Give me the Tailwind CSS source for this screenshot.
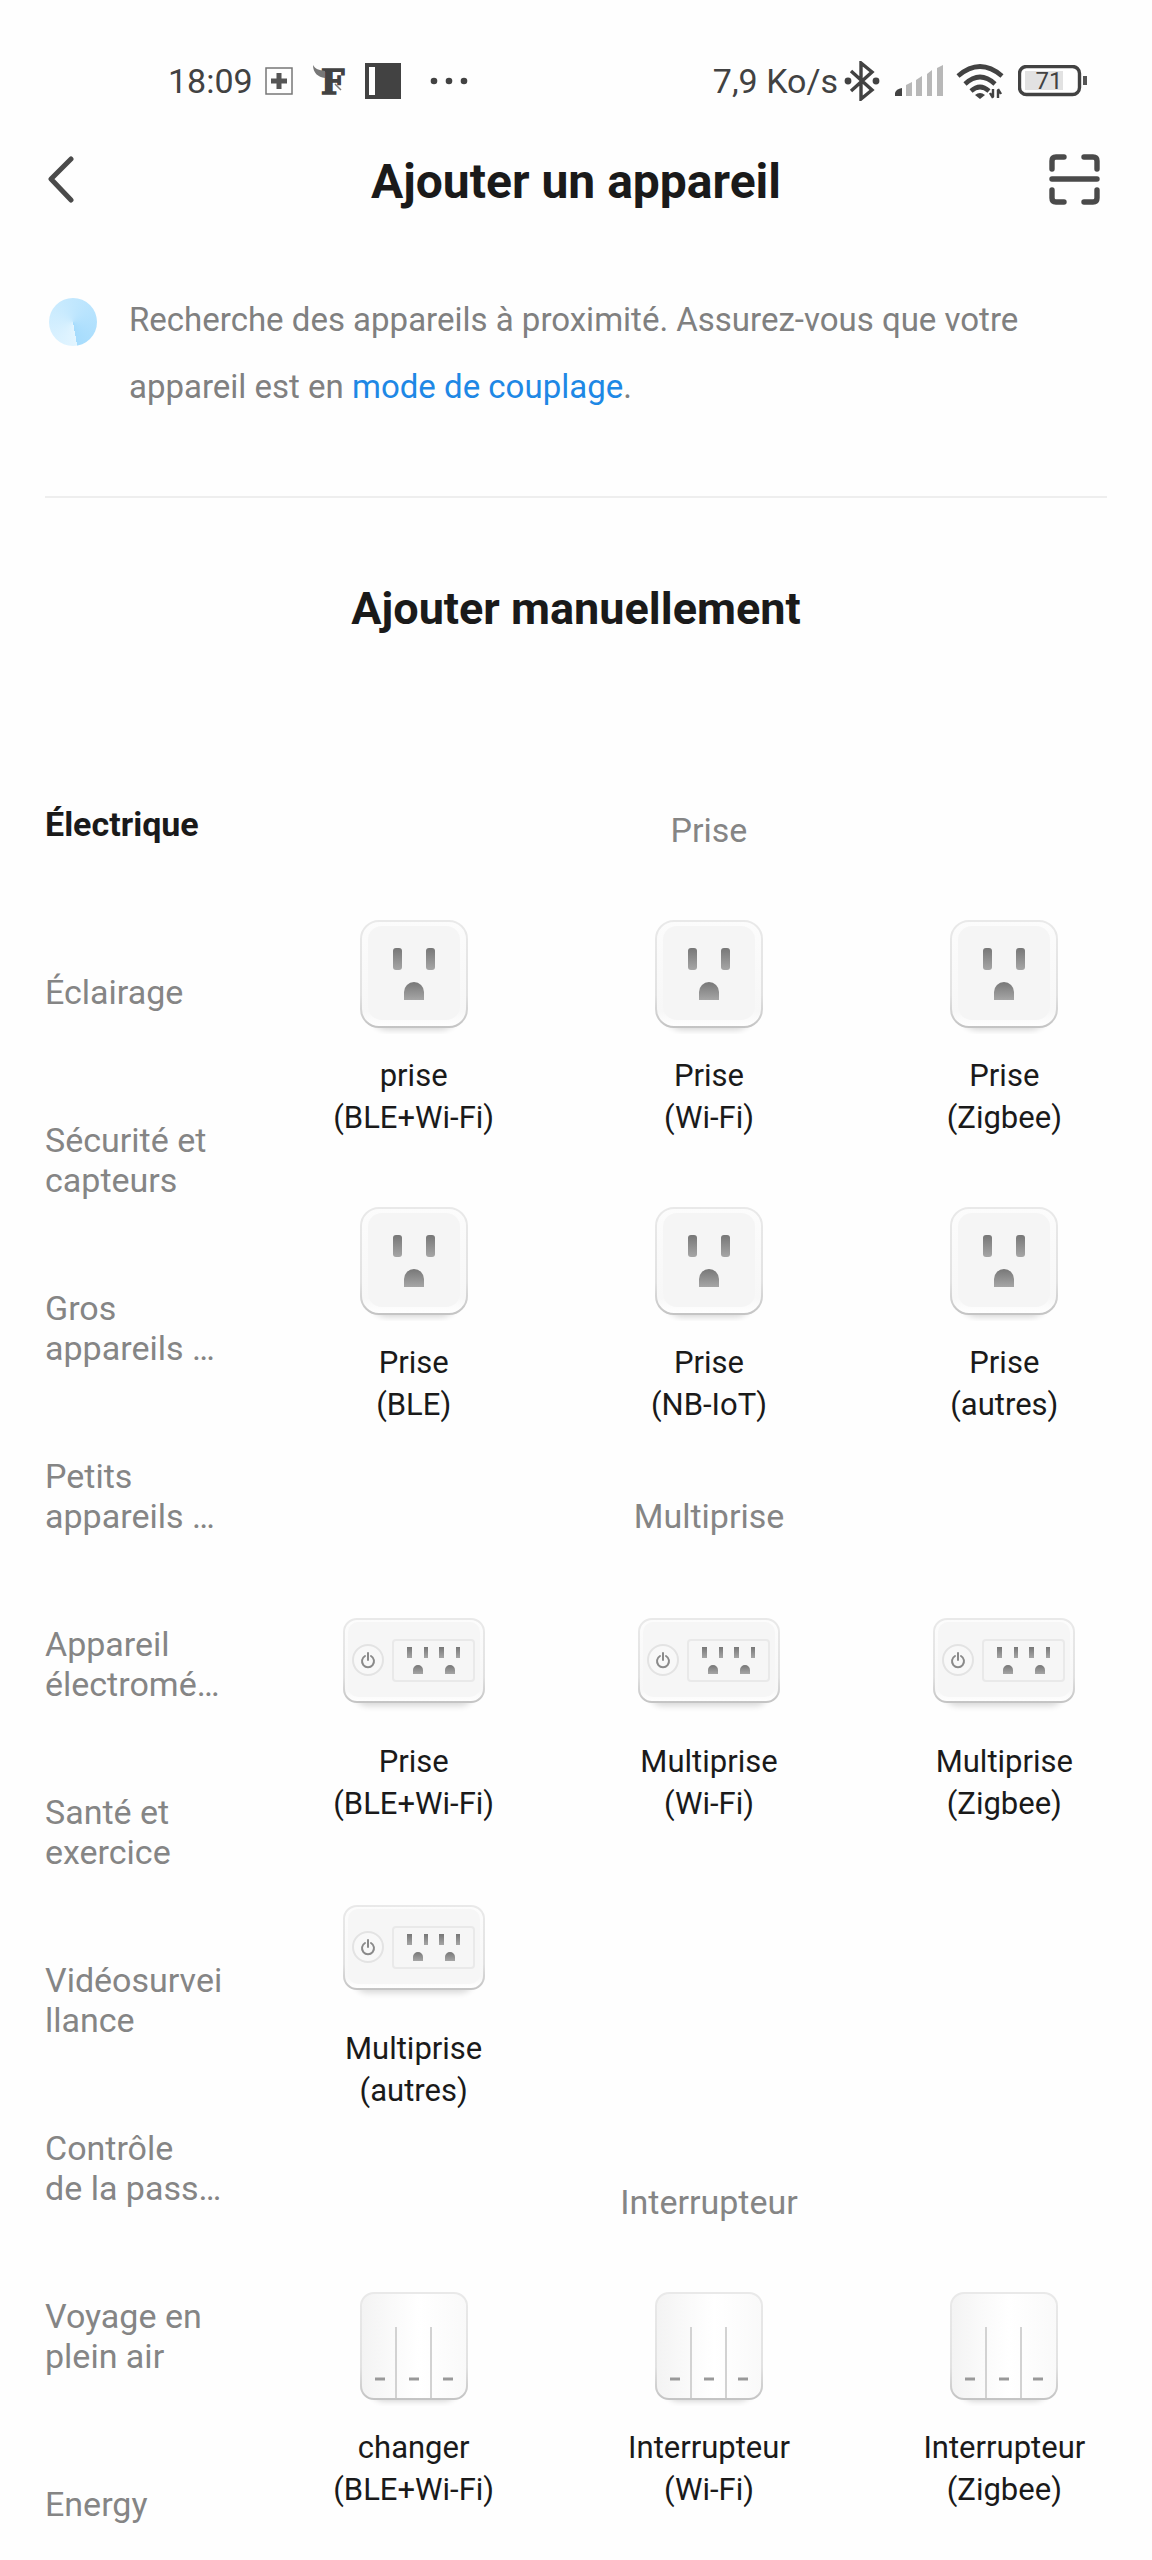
<!DOCTYPE html>
<html lang="fr">
<head>
    <meta charset="UTF-8">
    <meta name="viewport" content="width=device-width, initial-scale=1.0">
    <title>Ajouter un appareil</title>
    <script src="https://cdn.jsdelivr.net/npm/@tailwindcss/browser@4"></script>
</head>
<body class="bg-[#fefefe] font-[Roboto,sans-serif] text-[#1a1a1a] h-screen flex flex-col overflow-hidden">

    <!-- Shared drawings -->
    <svg class="absolute size-0" aria-hidden="true">
        <defs>
            <linearGradient id="slot" x1="0" y1="0" x2="0" y2="1">
                <stop offset="0" stop-color="#777"/>
                <stop offset="1" stop-color="#a6a6a6"/>
            </linearGradient>
            <linearGradient id="body" x1="0" y1="0" x2="0" y2="1">
                <stop offset="0" stop-color="#fcfcfc"/>
                <stop offset=".85" stop-color="#f7f7f7"/>
                <stop offset="1" stop-color="#ffffff"/>
            </linearGradient>
            <linearGradient id="panel" x1="0" y1="0" x2="1" y2="0">
                <stop offset="0" stop-color="#f3f3f3"/>
                <stop offset=".3" stop-color="#fafafa"/>
                <stop offset=".55" stop-color="#ffffff"/>
                <stop offset="1" stop-color="#f9f9f9"/>
            </linearGradient>
            <linearGradient id="rim" x1="0" y1="0" x2="0" y2="1">
                <stop offset="0" stop-color="#e9e9e9"/>
                <stop offset=".7" stop-color="#e2e2e2"/>
                <stop offset="1" stop-color="#c4c4c4"/>
            </linearGradient>
            <filter id="soft" x="-20%" y="-20%" width="140%" height="150%">
                <feGaussianBlur stdDeviation="3"/>
            </filter>
        </defs>

        <symbol id="socket" viewBox="0 0 160 120">
            <rect x="36" y="18" width="88" height="98" rx="18" fill="#000" opacity=".16" filter="url(#soft)"/>
            <rect x="27" y="7" width="106" height="106" rx="18" fill="url(#body)" stroke="url(#rim)" stroke-width="2"/>
            <rect x="34" y="12" width="92" height="94" rx="14" fill="#f5f5f5"/>
            <rect x="59" y="34" width="9" height="22" rx="3" fill="url(#slot)"/>
            <rect x="92" y="34" width="9" height="22" rx="3" fill="url(#slot)"/>
            <path d="M70 86V78a10 10 0 0 1 20 0v8z" fill="url(#slot)"/>
        </symbol>

        <symbol id="strip" viewBox="0 0 160 120">
            <rect x="20" y="32" width="120" height="74" rx="14" fill="#000" opacity=".15" filter="url(#soft)"/>
            <rect x="10" y="19" width="140" height="83" rx="13" fill="url(#body)" stroke="url(#rim)" stroke-width="2"/>
            <rect x="14" y="22" width="132" height="75" rx="10" fill="#f6f6f6"/>
            <circle cx="34" cy="60" r="15" fill="#f8f8f8" stroke="#e3e3e3" stroke-width="2"/>
            <path d="M31 56a6 6 0 1 0 6 0M34 53v7" fill="none" stroke="#8a8a8a" stroke-width="2" stroke-linecap="round"/>
            <rect x="59" y="40" width="81" height="41" rx="3" fill="#f6f6f6" stroke="#e9e9e9" stroke-width="2"/>
            <rect x="73" y="47" width="5" height="11" fill="url(#slot)"/>
            <rect x="90" y="47" width="4" height="11" fill="url(#slot)"/>
            <rect x="105" y="47" width="5" height="11" fill="url(#slot)"/>
            <rect x="122" y="47" width="4" height="11" fill="url(#slot)"/>
            <path d="M79 74v-4a5 5 0 0 1 10 0v4zM111 74v-4a5 5 0 0 1 10 0v4z" fill="url(#slot)"/>
        </symbol>

        <symbol id="switch" viewBox="0 0 160 120">
            <rect x="36" y="18" width="88" height="97" rx="14" fill="#000" opacity=".18" filter="url(#soft)"/>
            <rect x="27" y="7" width="106" height="106" rx="13" fill="url(#panel)" stroke="url(#rim)" stroke-width="2"/>
            <path d="M62 41v71M97 41v71" stroke="#d2d2d2" stroke-width="2"/>
            <path d="M41 93h10M75 93h10M109 93h10" stroke="#999" stroke-width="3"/>
        </symbol>
    </svg>

    <!-- Status bar -->
    <div class="shrink-0 mt-14 h-[50px] flex items-center justify-between pl-[168px] pr-16 text-[34px] leading-none text-[#424242]">
        <div class="flex items-center">
            <span>18:09</span>
            <svg class="ml-3 size-7" viewBox="0 0 28 28">
                <rect x="1" y="1" width="26" height="26" fill="none" stroke="#777" stroke-width="1.5"/>
                <path d="M14 6v16M6 14h16" stroke="#555" stroke-width="5"/>
            </svg>
            <svg class="ml-5 w-9 h-8 overflow-visible" viewBox="0 0 36 32">
                <text x="8" y="29" font-family="DejaVu Serif" font-weight="700" font-size="33" fill="#424242" stroke="#424242" stroke-width="1.5">F</text>
                <path d="M0 0c2 4 6 5 12 6v7C5 12 0 8 0 0z" fill="#777"/>
                <path d="M22 19l6 6" stroke="#777" stroke-width="1.5"/>
            </svg>
            <svg class="ml-4 size-9" viewBox="0 0 36 36">
                <path d="M0 0h36v36H0z" fill="#424242"/>
                <path d="M4 4h6v28H4z" fill="#fff"/>
            </svg>
            <svg class="ml-7 w-10 h-2" viewBox="0 0 40 8">
                <g fill="#424242"><circle cx="5" cy="4" r="3.3"/><circle cx="20" cy="4" r="3.3"/><circle cx="35" cy="4" r="3.3"/></g>
            </svg>
        </div>
        <div class="flex items-center">
            <span>7,9 Ko/s</span>
            <svg class="ml-1.5 w-9 h-10" viewBox="0 0 36 40">
                <path d="M7 10l21 19-11 9V2l11 9L7 30" fill="none" stroke="#424242" stroke-width="3.4"/>
                <circle cx="4" cy="20" r="3.4" fill="#424242"/><circle cx="32" cy="20" r="3.4" fill="#424242"/>
            </svg>
            <svg class="ml-3.5 w-[50px] h-8" viewBox="0 0 50 32">
                <path d="M1 31v-3q1-4 7-5v8z" fill="#424242"/>
                <path d="M12 31V20l6-3v14zM22 31V15l6-4v20zM33 31V9l5-4v26zM43 31V3l6-3v31z" fill="#b8b8b8"/>
            </svg>
            <svg class="ml-3 w-12 h-9" viewBox="0 0 48 36">
                <path d="M2 13Q24-6 46 13M9 21Q24 7 39 21M15 28Q24 20 33 28" fill="none" stroke="#424242" stroke-width="4.6"/>
                <path d="M19 32q5-4 10 0l-5 4z" fill="#424242"/>
                <path d="M37 26v8M34 30l3 5M42 35v-8M45 31l-3-5" fill="none" stroke="#424242" stroke-width="2.4"/>
            </svg>
            <svg class="ml-3.5 w-[70px] h-8" viewBox="0 0 70 32">
                <rect x="1.5" y="1.5" width="60" height="28" rx="7" fill="#fff" stroke="#424242" stroke-width="3.4"/>
                <path d="M7 6h38v19H7z" fill="#e2e2e2"/>
                <path d="M65 11h4v9h-4z" fill="#555"/>
                <text x="31" y="24" text-anchor="middle" font-family="Roboto" font-size="24" fill="#424242">71</text>
            </svg>
        </div>
    </div>

    <!-- Header -->
    <header class="shrink-0 h-[152px] flex items-center px-12">
        <button type="button" aria-label="Retour">
            <svg class="w-14 h-[52px]" viewBox="0 0 56 52" fill="none" stroke="#4a4a4a" stroke-width="5" stroke-linecap="round" stroke-linejoin="round">
                <path d="M23 3L3 23l20 21"/>
            </svg>
        </button>
        <h1 class="flex-1 text-center text-5xl font-bold">Ajouter un appareil</h1>
        <button type="button" aria-label="Scanner">
            <svg class="w-14 h-[52px] overflow-visible" viewBox="0 0 56 52" fill="none" stroke="#4a4a4a" stroke-width="5.4" stroke-linecap="round">
                <path d="M4 13V5q0-4 4-4h8M36 1h9q4 0 4 4v8M49 34v8q0 4-4 4h-9M16 46H8q-4 0-4-4v-8M4 23h45"/>
            </svg>
        </button>
    </header>

    <!-- Nearby search -->
    <section class="shrink-0 mx-[45px] pt-7 pb-[76px] border-b-2 border-[#eeeeee] flex">
        <div class="mt-3 ml-1 size-12 rounded-full shrink-0 bg-[conic-gradient(from_170deg,#e3f5ff,#c3e8fe_50%,#a6dcfd)]"></div>
        <p class="ml-8 text-[33px] leading-[67px] text-[#808080]">
            Recherche des appareils à proximité. Assurez-vous que votre<br>
            appareil est en <a href="#" class="text-[#1e88e5]">mode de couplage</a>.
        </p>
    </section>

    <h2 class="shrink-0 pt-[84px] pb-[104px] text-center text-[45px] leading-[54px] font-bold">Ajouter manuellement</h2>

    <main class="flex-1 min-h-0 flex">
        <!-- Categories -->
        <nav class="w-[266px] shrink-0 overflow-hidden pl-[45px] text-[34px] leading-10 text-[#858585]">
            <button type="button" class="w-full h-[168px] text-left block font-bold text-[#1a1a1a]">Électrique</button>
            <button type="button" class="w-full h-[168px] text-left block">Éclairage</button>
            <button type="button" class="w-full h-[168px] text-left block">Sécurité et<br>capteurs</button>
            <button type="button" class="w-full h-[168px] text-left block">Gros<br>appareils …</button>
            <button type="button" class="w-full h-[168px] text-left block">Petits<br>appareils …</button>
            <button type="button" class="w-full h-[168px] text-left block">Appareil<br>électromé…</button>
            <button type="button" class="w-full h-[168px] text-left block">Santé et<br>exercice</button>
            <button type="button" class="w-full h-[168px] text-left block">Vidéosurvei<br>llance</button>
            <button type="button" class="w-full h-[168px] text-left block">Contrôle<br>de la pass…</button>
            <button type="button" class="w-full h-[168px] text-left block">Voyage en<br>plein air</button>
            <button type="button" class="w-full h-[168px] text-left block">Energy</button>
        </nav>

        <!-- Devices -->
        <div class="flex-1 overflow-hidden pt-[34px] text-[31px] leading-[42px]">
            <section>
                <h3 class="h-28 flex items-center justify-center text-[34px] text-[#858585]">Prise</h3>
                <div class="grid grid-cols-3">
                    <button type="button" class="h-[287px] pt-7 flex flex-col items-center">
                        <svg class="w-40 h-[120px] mb-[21px]"><use href="#socket"/></svg>
                        <span>prise<br>(BLE+Wi-Fi)</span>
                    </button>
                    <button type="button" class="h-[287px] pt-7 flex flex-col items-center">
                        <svg class="w-40 h-[120px] mb-[21px]"><use href="#socket"/></svg>
                        <span>Prise<br>(Wi-Fi)</span>
                    </button>
                    <button type="button" class="h-[287px] pt-7 flex flex-col items-center">
                        <svg class="w-40 h-[120px] mb-[21px]"><use href="#socket"/></svg>
                        <span>Prise<br>(Zigbee)</span>
                    </button>
                    <button type="button" class="h-[287px] pt-7 flex flex-col items-center">
                        <svg class="w-40 h-[120px] mb-[21px]"><use href="#socket"/></svg>
                        <span>Prise<br>(BLE)</span>
                    </button>
                    <button type="button" class="h-[287px] pt-7 flex flex-col items-center">
                        <svg class="w-40 h-[120px] mb-[21px]"><use href="#socket"/></svg>
                        <span>Prise<br>(NB-IoT)</span>
                    </button>
                    <button type="button" class="h-[287px] pt-7 flex flex-col items-center">
                        <svg class="w-40 h-[120px] mb-[21px]"><use href="#socket"/></svg>
                        <span>Prise<br>(autres)</span>
                    </button>
                </div>
            </section>

            <section>
                <h3 class="h-28 flex items-center justify-center text-[34px] text-[#858585]">Multiprise</h3>
                <div class="grid grid-cols-3">
                    <button type="button" class="h-[287px] pt-7 flex flex-col items-center">
                        <svg class="w-40 h-[120px] mb-[21px]"><use href="#strip"/></svg>
                        <span>Prise<br>(BLE+Wi-Fi)</span>
                    </button>
                    <button type="button" class="h-[287px] pt-7 flex flex-col items-center">
                        <svg class="w-40 h-[120px] mb-[21px]"><use href="#strip"/></svg>
                        <span>Multiprise<br>(Wi-Fi)</span>
                    </button>
                    <button type="button" class="h-[287px] pt-7 flex flex-col items-center">
                        <svg class="w-40 h-[120px] mb-[21px]"><use href="#strip"/></svg>
                        <span>Multiprise<br>(Zigbee)</span>
                    </button>
                    <button type="button" class="h-[287px] pt-7 flex flex-col items-center">
                        <svg class="w-40 h-[120px] mb-[21px]"><use href="#strip"/></svg>
                        <span>Multiprise<br>(autres)</span>
                    </button>
                </div>
            </section>

            <section>
                <h3 class="h-28 flex items-center justify-center text-[34px] text-[#858585]">Interrupteur</h3>
                <div class="grid grid-cols-3">
                    <button type="button" class="h-[287px] pt-7 flex flex-col items-center">
                        <svg class="w-40 h-[120px] mb-[21px]"><use href="#switch"/></svg>
                        <span>changer<br>(BLE+Wi-Fi)</span>
                    </button>
                    <button type="button" class="h-[287px] pt-7 flex flex-col items-center">
                        <svg class="w-40 h-[120px] mb-[21px]"><use href="#switch"/></svg>
                        <span>Interrupteur<br>(Wi-Fi)</span>
                    </button>
                    <button type="button" class="h-[287px] pt-7 flex flex-col items-center">
                        <svg class="w-40 h-[120px] mb-[21px]"><use href="#switch"/></svg>
                        <span>Interrupteur<br>(Zigbee)</span>
                    </button>
                </div>
            </section>
        </div>
    </main>
</body>
</html>
